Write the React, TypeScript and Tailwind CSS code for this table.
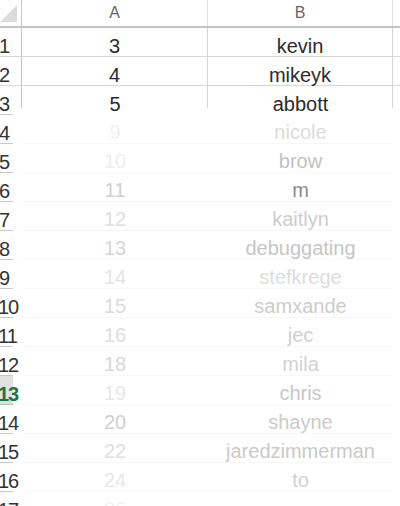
import React from 'react';

type FadedRow = { n: string; a: string; b: string; nShift: string; aColor: string; bColor: string; selected?: boolean };

const top = [
  { n: '1', a: '3', b: 'kevin' },
  { n: '2', a: '4', b: 'mikeyk' },
  { n: '3', a: '5', b: 'abbott' },
];

const faded: FadedRow[] = [
  { n: '4', a: '9', b: 'nicole', nShift: 'ml-[-1px]', aColor: 'text-[#f2f2f2]', bColor: 'text-[#dcdcdc]' },
  { n: '5', a: '10', b: 'brow', nShift: 'ml-[-1px]', aColor: 'text-[#eeeeee]', bColor: 'text-[#c2c2c2]' },
  { n: '6', a: '11', b: 'm', nShift: 'ml-[-1px]', aColor: 'text-[#cfcfcf]', bColor: 'text-[#8c8c8c]' },
  { n: '7', a: '12', b: 'kaitlyn', nShift: 'ml-[-1px]', aColor: 'text-[#dddddd]', bColor: 'text-[#cdcdcd]' },
  { n: '8', a: '13', b: 'debuggating', nShift: 'ml-[-1px]', aColor: 'text-[#d6d6d6]', bColor: 'text-[#c6c6c6]' },
  { n: '9', a: '14', b: 'stefkrege', nShift: 'ml-[-1px]', aColor: 'text-[#e4e4e4]', bColor: 'text-[#dddddd]' },
  { n: '10', a: '15', b: 'samxande', nShift: 'ml-[-2px]', aColor: 'text-[#dcdcdc]', bColor: 'text-[#cccccc]' },
  { n: '11', a: '16', b: 'jec', nShift: 'ml-[-2px]', aColor: 'text-[#dedede]', bColor: 'text-[#d0d0d0]' },
  { n: '12', a: '18', b: 'mila', nShift: 'ml-[-2px]', aColor: 'text-[#d8d8d8]', bColor: 'text-[#d2d2d2]' },
  { n: '13', a: '19', b: 'chris', nShift: 'ml-[-2px]', aColor: 'text-[#e8e8e8]', bColor: 'text-[#c8c8c8]', selected: true },
  { n: '14', a: '20', b: 'shayne', nShift: 'ml-[-2px]', aColor: 'text-[#d0d0d0]', bColor: 'text-[#cbcbcb]' },
  { n: '15', a: '22', b: 'jaredzimmerman', nShift: 'ml-[-2px]', aColor: 'text-[#e0e0e0]', bColor: 'text-[#cacaca]' },
  { n: '16', a: '24', b: 'to', nShift: 'ml-[-2px]', aColor: 'text-[#e8e8e8]', bColor: 'text-[#d0d0d0]' },
  { n: '17', a: '26', b: '', nShift: 'ml-[-2px]', aColor: 'text-[#f2f2f2]', bColor: 'text-[#e0e0e0]' },
];

const App: React.FC = () => (
  <div className="w-[400px] h-[506px] overflow-hidden bg-white font-['Liberation_Sans',Arial,sans-serif] text-[20px] leading-[22px]">
    {/* column headers */}
    <div className="grid grid-cols-[22px_186px_185px_1fr] h-[28px] border-b-2 border-[#c4c4c4]">
      <div className="border-r border-[#c6c6c6]">
        <svg width="22" height="26" viewBox="0 0 22 26">
          <polygon points="0,22 17,22 17,5" fill="#dcdcdc" />
        </svg>
      </div>
      <div className="flex items-center justify-center border-r border-[#e2e2e2] text-[16px] text-[#666]">A</div>
      <div className="flex items-center justify-center border-r border-[#e2e2e2] text-[16px] text-[#666]">B</div>
      <div />
    </div>

    {/* visible rows */}
    {top.slice(0, 2).map((r) => (
      <div key={r.n} className="grid grid-cols-[22px_186px_185px_1fr] h-[29px] border-b border-[#d6d6d6]">
        <div className="flex items-end border-r border-[#c6c6c6] text-[#333]">
          <span className="ml-[-1px] mb-[-1px] whitespace-nowrap">{r.n}</span>
        </div>
        <div className="flex items-end justify-center border-r border-[#d6d6d6] text-[#2b2b2b]">
          <span className="mb-[-1px]">{r.a}</span>
        </div>
        <div className="flex items-end justify-center border-r border-[#d6d6d6] text-[#2b2b2b]">
          <span className="mb-[-1px]">{r.b}</span>
        </div>
        <div />
      </div>
    ))}

    {/* third row: grid lines fade out before its bottom edge */}
    <div className="grid grid-cols-[22px_186px_185px_1fr] h-[29px]">
      <div className="relative flex items-end text-[#333]">
        <div className="w-[13px] h-full flex items-end border-b border-[#c8c8c8]">
          <span className="ml-[-1px] mb-[-1px] whitespace-nowrap">{top[2].n}</span>
        </div>
        <div className="absolute right-0 top-0 h-[22px] w-px bg-[#c6c6c6]" />
      </div>
      <div className="relative flex items-end justify-center text-[#2b2b2b]">
        <span>{top[2].a}</span>
        <div className="absolute right-0 top-0 h-[22px] w-px bg-[#d6d6d6]" />
      </div>
      <div className="relative flex items-end justify-center text-[#2b2b2b]">
        <span>{top[2].b}</span>
        <div className="absolute right-0 top-0 h-[22px] w-px bg-[#d6d6d6]" />
      </div>
      <div />
    </div>

    {/* faded rows */}
    {faded.map((r) => (
      <div key={r.n} className="grid grid-cols-[22px_186px_185px_1fr] h-[29px]">
        <div className="flex">
          <div
            className={`w-[13px] flex items-end border-b ${
              r.selected ? 'bg-[#e1e1e1] border-[#a9c2b2] text-[#217346] font-bold' : 'border-[#c8c8c8] text-[#333]'
            }`}
          >
            <span className={`${r.nShift} whitespace-nowrap tracking-[-1px] mb-[-1px]`}>{r.n}</span>
          </div>
        </div>
        <div className={`flex items-end justify-center border-b border-[#f7f7f7] ${r.aColor}`}>
          <span>{r.a}</span>
        </div>
        <div className={`flex items-end justify-center border-b border-[#f7f7f7] ${r.bColor}`}>
          <span className="whitespace-nowrap">{r.b}</span>
        </div>
        <div />
      </div>
    ))}
  </div>
);

export default App;
